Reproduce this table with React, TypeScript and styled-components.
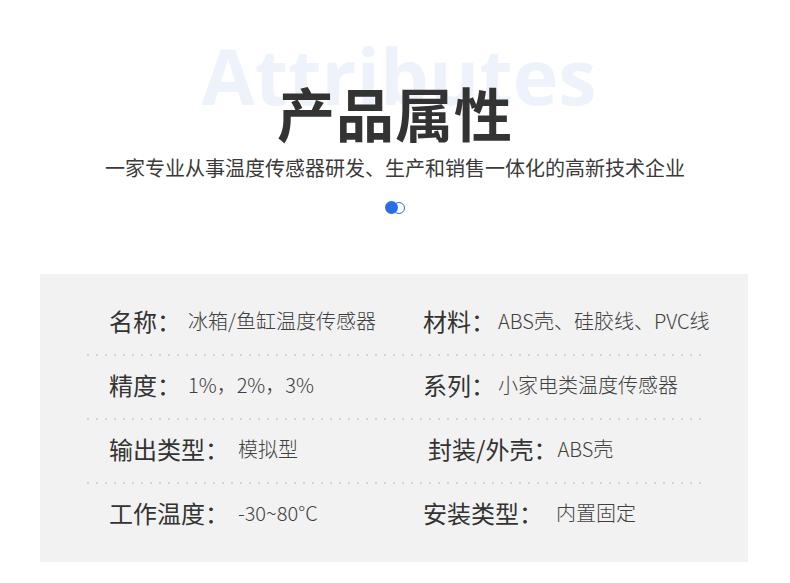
import React from "react";
import styled, { createGlobalStyle } from "styled-components";

const Global = createGlobalStyle`
  html, body { margin: 0; padding: 0; background: #ffffff; }
  body { font-family: "Noto Sans CJK SC", "Noto Sans", sans-serif; color: #333; }
`;

const Page = styled.div`
  width: 790px;
  height: 583px;
  overflow: hidden;
  background: #ffffff;
`;

const Header = styled.header`
  position: relative;
  padding-top: 77px;
  display: flex;
  flex-direction: column;
  align-items: center;
`;

const Watermark = styled.div`
  position: absolute;
  top: 37px;
  left: 0;
  right: 0;
  padding-left: 8px;
  text-align: center;
  font-family: "Open Sans", "Liberation Sans", sans-serif;
  font-weight: 700;
  font-size: 77px;
  line-height: 1;
  color: #eef2fb;
  z-index: 0;
`;

const Title = styled.h1`
  position: relative;
  z-index: 1;
  margin: 0;
  font-size: 58px;
  line-height: 70px;
  font-weight: 700;
  color: #333333;
  letter-spacing: 1px;
`;

const Subtitle = styled.p`
  position: relative;
  z-index: 1;
  margin: 6px 0 0;
  font-size: 20px;
  line-height: 30px;
  color: #3a3a3a;
`;

const Dots = styled.div`
  margin-top: 18px;
  display: flex;
  align-items: center;
`;

const DotFilled = styled.span`
  width: 13px;
  height: 13px;
  border-radius: 50%;
  background: #2b6de5;
  position: relative;
  z-index: 1;
`;

const DotRing = styled.span`
  width: 10px;
  height: 10px;
  border-radius: 50%;
  border: 1.5px solid #2b6de5;
  background: #ffffff;
  margin-left: -5px;
`;

const Panel = styled.section`
  margin: 60px 42px 0 40px;
  background: #f2f2f2;
  padding: 18px 47px 0 47px;
  height: 288px;
  box-sizing: border-box;
`;

const Row = styled.div<{ $last?: boolean }>`
  display: grid;
  grid-template-columns: 314px 1fr;
  padding: 14px 0 20px 22px;
  background-image: ${(p) =>
    p.$last ? "none" : "linear-gradient(to right, #d2d2d2 2px, transparent 2px)"};
  background-size: 9px 2px;
  background-repeat: repeat-x;
  background-position: left bottom;
`;

const Item = styled.div<{ $shift?: number }>`
  display: flex;
  align-items: center;
  height: 30px;
  margin-left: ${(p) => p.$shift ?? 0}px;
`;

const Label = styled.span<{ $gap: number }>`
  font-size: 24px;
  line-height: 30px;
  color: #333333;
  margin-right: ${(p) => p.$gap}px;
  white-space: nowrap;
`;

const Value = styled.span`
  font-size: 20px;
  line-height: 30px;
  font-weight: 300;
  color: #404040;
  white-space: nowrap;
`;

type Cell = { label: string; value: string; gap: number; shift?: number };

const rows: [Cell, Cell][] = [
  [
    { label: "名称：", value: "冰箱/鱼缸温度传感器", gap: 7 },
    { label: "材料：", value: "ABS壳、硅胶线、PVC线", gap: 3 },
  ],
  [
    { label: "精度：", value: "1%，2%，3%", gap: 7 },
    { label: "系列：", value: "小家电类温度传感器", gap: 3 },
  ],
  [
    { label: "输出类型：", value: "模拟型", gap: 9 },
    { label: "封装/外壳：", value: "ABS壳", gap: 0, shift: 5 },
  ],
  [
    { label: "工作温度：", value: "-30~80°C", gap: 9 },
    { label: "安装类型：", value: "内置固定", gap: 13 },
  ],
];

export default function App() {
  return (
    <Page>
      <Global />
      <Header>
        <Watermark>Attributes</Watermark>
        <Title>产品属性</Title>
        <Subtitle>一家专业从事温度传感器研发、生产和销售一体化的高新技术企业</Subtitle>
        <Dots>
          <DotFilled />
          <DotRing />
        </Dots>
      </Header>
      <Panel>
        {rows.map((r, i) => (
          <Row key={i} $last={i === rows.length - 1}>
            {r.map((c, j) => (
              <Item key={j} $shift={c.shift}>
                <Label $gap={c.gap}>{c.label}</Label>
                <Value>{c.value}</Value>
              </Item>
            ))}
          </Row>
        ))}
      </Panel>
    </Page>
  );
}
